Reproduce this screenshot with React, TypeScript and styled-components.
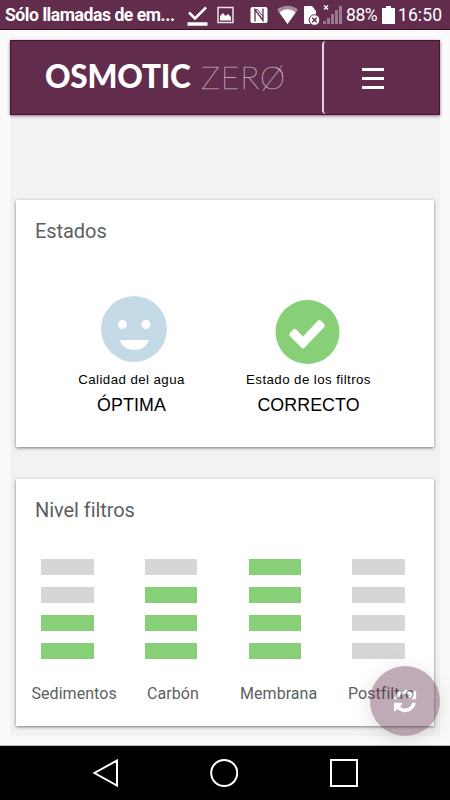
import React from "react";
import styled, { createGlobalStyle } from "styled-components";

const plum = "#622d4d";
const green = "#88d077";
const gray = "#d6d6d6";

const GlobalStyle = createGlobalStyle`
  *, *::before, *::after { box-sizing: border-box; }
  body { margin: 0; background: #fafafa; font-family: Roboto, sans-serif; }
  svg { display: block; flex: none; }
`;

const Phone = styled.div`
  width: 450px;
  height: 800px;
  display: flex;
  flex-direction: column;
  overflow: hidden;
  background: #fafafa;
  position: relative;
`;

const StatusBar = styled.header`
  height: 30px;
  flex: none;
  display: flex;
  align-items: flex-start;
  padding-left: 5px;
  background: ${plum};
  border-bottom: 1px solid #3f0927;
  color: #fff;
  white-space: nowrap;
`;

const Carrier = styled.span`
  width: 182px;
  font-size: 17.6px;
  font-weight: 700;
  line-height: 31px;
  letter-spacing: -0.46px;
`;

const StatusValue = styled.span<{ $width: number; $spacing: number }>`
  width: ${(p) => p.$width}px;
  font-size: 17.5px;
  line-height: 31px;
  letter-spacing: ${(p) => p.$spacing}px;
`;

const StatusIcon = styled.svg<{ $gap: number }>`
  margin-right: ${(p) => p.$gap}px;
`;

const Page = styled.main`
  width: 430px;
  height: 695.5px;
  margin: 10px 10px 9.5px;
  flex: none;
  background: #f2f2f2;
`;

const AppBar = styled.div`
  height: 75px;
  display: flex;
  background: ${plum};
  border: 1px solid #4c1233;
  border-bottom-color: #5b0a3e;
  box-shadow: 0 1px 3px rgba(0, 0, 0, 0.5);
`;

const Logo = styled.div`
  width: 311px;
  padding-left: 34px;
  display: flex;
  align-items: center;
  color: #fff;
  white-space: nowrap;
`;

const LogoBold = styled.span`
  width: 156px;
  padding-bottom: 2px;
  font: 900 31.5px/71px Lato, sans-serif;
  letter-spacing: -0.2px;
`;

const LogoThin = styled.span`
  padding-bottom: 2px;
  font: 100 32px/71px Lato, sans-serif;
  letter-spacing: 0.8px;
  color: rgba(255, 255, 255, 0.62);
  -webkit-text-stroke: 0.5px rgba(255, 255, 255, 0.4);
`;

const MenuButton = styled.button`
  flex: 1;
  padding: 2px 0 0 38px;
  border: 0;
  border-left: 2px solid #e0d3db;
  border-radius: 4px 0 0 4px;
  background: transparent;
  display: flex;
  flex-direction: column;
  justify-content: center;
  gap: 6px;
`;

const MenuLine = styled.span`
  width: 22px;
  height: 3px;
  background: #fff;
`;

const Cards = styled.div`
  padding: 85px 6px 0;
  display: flex;
  flex-direction: column;
  gap: 32px;
`;

const Card = styled.section`
  height: 247px;
  background: #fff;
  box-shadow: 0 1px 3px rgba(0, 0, 0, 0.5);
`;

const CardTitle = styled.h2`
  margin: 0;
  padding: 16px 0 0 19px;
  font-size: 20px;
  font-weight: 400;
  line-height: 30px;
  color: #5b5f63;
  letter-spacing: -0.06px;
`;

const States = styled.div`
  display: flex;
  padding: 50px 0 0 27px;
`;

const State = styled.div`
  width: 177px;
  display: flex;
  flex-direction: column;
  align-items: center;
  font-family: "Liberation Sans", Arial, sans-serif;
  color: #000;
  white-space: nowrap;
`;

const StateIcon = styled.svg`
  width: 68px;
  height: 68px;
  overflow: visible;
`;

const StateName = styled.span`
  margin-top: 7px;
  font-size: 13.3px;
  line-height: 18px;
  letter-spacing: 0.42px;
`;

const StateValue = styled.strong`
  margin-top: 5px;
  font-size: 17.8px;
  font-weight: 400;
  line-height: 22px;
  letter-spacing: 0.1px;
`;

const Levels = styled.div`
  display: grid;
  grid-template-columns: repeat(4, 103.8px);
  padding: 34px 0 0 25px;
`;

const Level = styled.div`
  width: 52.7px;
  display: flex;
  flex-direction: column;
  gap: 12.3px;
`;

const Bar = styled.div<{ $on: boolean }>`
  height: 15.7px;
  background: ${(p) => (p.$on ? green : gray)};
`;

const LevelNames = styled.div`
  display: grid;
  grid-template-columns: 115.5px 93px 108px 80px;
  padding: 23px 0 0 15.5px;
  font-size: 16px;
  line-height: 24px;
  letter-spacing: 0.05px;
  color: #5b5f63;
`;

const RefreshButton = styled.button`
  position: absolute;
  left: 370px;
  top: 666px;
  width: 70px;
  height: 70px;
  padding: 0;
  border: 0;
  border-radius: 50%;
  background: ${plum};
  opacity: 0.4;
  display: flex;
  align-items: center;
  justify-content: center;
  box-shadow: 0 4px 18px rgba(0, 0, 0, 0.3);
`;

const NavBar = styled.nav`
  flex: 1;
  background: #000;
  border-top: 1px solid #b9bcbc;
  padding: 13px 0 0 92px;
  display: flex;
`;

const NavIcon = styled.svg<{ $gap: number }>`
  margin-right: ${(p) => p.$gap}px;
  fill: none;
  stroke: #fff;
  stroke-width: 2;
`;

const filters = [
  { name: "Sedimentos", level: 2 },
  { name: "Carbón", level: 3 },
  { name: "Membrana", level: 4 },
  { name: "Postfiltro", level: 0 },
];

function StatusIcons() {
  return (
    <>
      <StatusIcon $gap={9} width="21" height="30" fill="none" stroke="#fff">
        <path d="M2 12.5 8 18.5 19 7.5" strokeWidth="2.5" />
        <path d="M.5 24h20" strokeWidth="3.5" />
      </StatusIcon>
      <StatusIcon $gap={16} width="17" height="30">
        <rect x="1" y="7.5" width="15" height="15" fill="none" stroke="#eadfe6" strokeWidth="1.5" />
        <path d="M3 20.5V16l3-3 2.5 3 2.5-2 3 3v3.5z" fill="#fff" />
      </StatusIcon>
      <StatusIcon $gap={9} width="18" height="30">
        <rect x="0.5" y="7" width="17" height="16" rx="2" fill="#fff" />
        <path d="M5 21.5V9.5l8 11V8.5" fill="none" stroke={plum} strokeWidth="1.3" />
        <path d="M5 9.5h2.5l5.5 7" fill="none" stroke={plum} strokeWidth="0.9" />
      </StatusIcon>
      <StatusIcon $gap={5} width="21" height="30">
        <path d="M0 9.5Q10.5 2 21 9.5L10.5 24z" fill="#a98a9c" />
        <path d="M2.4 12.5Q10.5 6 18.6 12.5L10.5 24z" fill="#fff" />
      </StatusIcon>
      <StatusIcon $gap={3} width="17" height="30">
        <path d="M1 7q0-1 1-1h7l4 5v13H2q-1 0-1-1z" fill="#fff" />
        <circle cx="11.5" cy="20" r="5.3" fill="#fff" stroke={plum} />
        <path d="m9.2 17.7 4.6 4.6m0-4.6-4.6 4.6" stroke={plum} strokeWidth="1.5" />
      </StatusIcon>
      <StatusIcon $gap={4} width="19" height="30">
        <path d="m1 5.5 4 4m0-4-4 4" stroke="#fff" strokeWidth="1.3" />
        <path d="M0 21h3v3H0zM4 18h3v6H4zM8 14h3v10H8zM12 10h3v14h-3zM16 6h3v18h-3z" fill="#9c7a8e" />
      </StatusIcon>
    </>
  );
}

export default function App() {
  return (
    <Phone>
      <GlobalStyle />
      <StatusBar>
        <Carrier>Sólo llamadas de em...</Carrier>
        <StatusIcons />
        <StatusValue $width={36} $spacing={-0.4}>88%</StatusValue>
        <StatusIcon $gap={3} width="13" height="30" fill="#fff">
          <path d="M4 6h5v2h4v16H0V8h4z" />
        </StatusIcon>
        <StatusValue $width={46} $spacing={0.1}>16:50</StatusValue>
      </StatusBar>
      <Page>
        <AppBar>
          <Logo>
            <LogoBold>OSMOTIC</LogoBold>
            <LogoThin>ZERØ</LogoThin>
          </Logo>
          <MenuButton aria-label="Menú">
            <MenuLine />
            <MenuLine />
            <MenuLine />
          </MenuButton>
        </AppBar>
        <Cards>
          <Card>
            <CardTitle>Estados</CardTitle>
            <States>
              <State>
                <StateIcon viewBox="0 0 68 68">
                  <circle cx="36" cy="33" r="33" fill="#c4dbe7" />
                  <circle cx="24.5" cy="28.5" r="4.5" fill="#fff" />
                  <circle cx="48" cy="28.5" r="4.5" fill="#fff" />
                  <path d="M22 44h28.5c-1 6-7 10-14.2 10S23 50 22 44z" fill="#fff" />
                </StateIcon>
                <StateName>Calidad del agua</StateName>
                <StateValue>ÓPTIMA</StateValue>
              </State>
              <State>
                <StateIcon viewBox="0 0 68 68">
                  <circle cx="32.5" cy="36" r="32" fill={green} />
                  <g transform="translate(11.6 16) scale(.0228 .024)">
                    <path
                      d="M1671 566q0 40-28 68l-724 724-136 136q-28 28-68 28t-68-28l-136-136-362-362q-28-28-28-68t28-68l136-136q28-28 68-28t68 28l294 295 656-657q28-28 68-28t68 28l136 136q28 28 28 68z"
                      fill="#fff"
                    />
                  </g>
                </StateIcon>
                <StateName>Estado de los filtros</StateName>
                <StateValue>CORRECTO</StateValue>
              </State>
            </States>
          </Card>
          <Card>
            <CardTitle>Nivel filtros</CardTitle>
            <Levels>
              {filters.map((f) => (
                <Level key={f.name}>
                  {[4, 3, 2, 1].map((step) => (
                    <Bar key={step} $on={f.level >= step} />
                  ))}
                </Level>
              ))}
            </Levels>
            <LevelNames>
              {filters.map((f) => (
                <span key={f.name}>{f.name}</span>
              ))}
            </LevelNames>
          </Card>
        </Cards>
      </Page>
      <NavBar>
        <NavIcon $gap={91} width="27" height="28">
          <path d="M25 1.5v25L2.5 14z" />
        </NavIcon>
        <NavIcon $gap={90.5} width="29" height="28">
          <circle cx="14.2" cy="14" r="13" />
        </NavIcon>
        <NavIcon $gap={0} width="28" height="28">
          <rect x="1" y="1" width="26" height="26" />
        </NavIcon>
      </NavBar>
      <RefreshButton aria-label="Actualizar">
        <svg width="26" height="26" viewBox="0 0 1792 1792" fill="#fff">
          <path d="M1639 1056q0 5-1 7-64 268-268 434.5t-478 166.5q-146 0-282.5-55t-243.5-157l-129 129q-19 19-45 19t-45-19-19-45v-448q0-26 19-45t45-19h448q26 0 45 19t19 45-19 45l-137 137q71 66 161 102t187 36q134 0 250-65t186-179q11-17 53-117 8-23 30-23h192q13 0 22.5 9.5t9.5 22.5zm25-800v448q0 26-19 45t-45 19h-448q-26 0-45-19t-19-45 19-45l138-138q-148-137-349-137-134 0-250 65t-186 179q-11 17-53 117-8 23-30 23h-199q-13 0-22.5-9.5t-9.5-22.5v-7q65-268 270-434.5t480-166.5q146 0 284 55.5t245 156.5l130-129q19-19 45-19t45 19 19 45z" />
        </svg>
      </RefreshButton>
    </Phone>
  );
}
